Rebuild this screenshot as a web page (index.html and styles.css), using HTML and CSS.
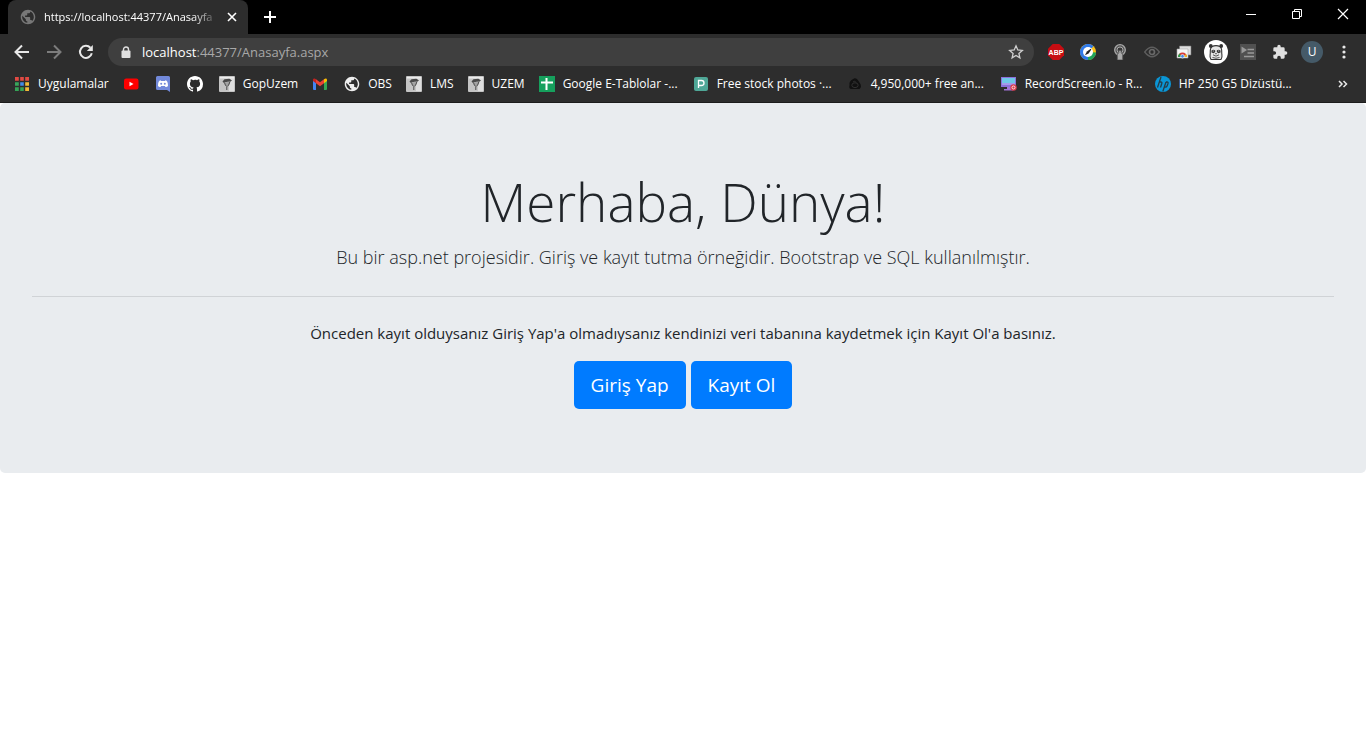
FILE: index.html
```html
<!DOCTYPE html>
<html lang="tr">
<head>
<meta charset="utf-8">
<title>Anasayfa</title>
<link rel="stylesheet" href="styles.css">
</head>
<body>
<svg class="defs" aria-hidden="true">
  <symbol id="globe" viewBox="1 1 22 22">
    <path fill="currentColor" d="M12 2C6.480 2 2 6.480 2 12s4.480 10 10 10 10-4.480 10-10S17.520 2 12 2zm-1 17.930c-3.950-.490-7-3.850-7-7.930 0-.620.080-1.210.210-1.790L9 15v1c0 1.100.9 2 2 2v1.930zm6.900-2.540c-.260-.810-1-1.390-1.900-1.390h-1v-3c0-.550-.450-1-1-1H8v-2h2c.550 0 1-.450 1-1V7h2c1.100 0 2-.9 2-2v-.410c2.930 1.190 5 4.060 5 7.410 0 2.080-.8 3.970-2.100 5.390z"/>
  </symbol>
  <symbol id="seal" viewBox="0 0 16 16">
    <rect width="16" height="16" rx="1" fill="#c4c4c4"/>
    <path d="M10 1h5v14h-5z" fill="#dedede"/>
    <path d="M1 1h14v1.500H1z" fill="#ececec"/>
    <path d="M3.500 5.500l2-2.300 5-.4 2.500 1.700-1.500 1-3 .2-4 1z" fill="#4a4a4a"/>
    <path d="M5.500 6.500l4-.6 1.500.6-1.500 3L8 10.500 6.300 9z" fill="#a2a2a2"/>
    <path d="M5.500 6.500l.8 2.500 1.500 1.500V14M11 5.500L9.600 9.300 8.500 10" fill="none" stroke="#3c3c3c" stroke-width=".9"/>
  </symbol>
</svg>

<header class="browser">
  <div class="tabstrip">
    <div class="tab">
      <svg class="icon tab-icon"><use href="#globe"/></svg>
      <span class="tab-title">https://localhost:44377/Anasayfa</span>
      <button class="plain" aria-label="Sekmeyi kapat"><svg width="10" height="10" viewBox="0 0 10 10"><path d="M1 1l8 8M9 1L1 9" stroke="#fff" stroke-width="1.600"/></svg></button>
    </div>
    <button class="plain new-tab" aria-label="Yeni sekme"><svg width="12" height="12" viewBox="0 0 12 12"><path d="M6 0v12M0 6h12" stroke="#fff" stroke-width="2"/></svg></button>
    <div class="window-controls">
      <button class="plain" aria-label="Küçült"><svg width="12" height="12" viewBox="0 0 12 12"><path d="M1 6.500h10" stroke="#fff"/></svg></button>
      <button class="plain" aria-label="Geri yükle"><svg width="12" height="12" viewBox="0 0 12 12"><path d="M1.500 3.500h7v7h-7zM3.500 3.500v-2h7v7h-2" fill="none" stroke="#fff"/></svg></button>
      <button class="plain" aria-label="Kapat"><svg width="12" height="12" viewBox="0 0 12 12"><path d="M1 1l10 10M11 1L1 11" stroke="#fff" stroke-width="1.200"/></svg></button>
    </div>
  </div>

  <div class="toolbar">
    <nav class="nav-buttons">
      <button class="plain" aria-label="Geri"><svg width="16" height="16" viewBox="0 0 16 16"><path d="M15 8H2M8 1.500L1.500 8 8 14.500" fill="none" stroke="#e8e8e8" stroke-width="2"/></svg></button>
      <button class="plain" aria-label="İleri"><svg width="16" height="16" viewBox="0 0 16 16"><path d="M1 8h13M8 1.500L14.500 8 8 14.500" fill="none" stroke="#7c7c7c" stroke-width="2"/></svg></button>
      <button class="plain" aria-label="Yenile"><svg width="16" height="16" viewBox="0 0 16 16"><path d="M13.800 9.300A6 6 0 1 1 12.400 3.800" fill="none" stroke="#e8e8e8" stroke-width="2"/><path d="M14.800 1v6h-6z" fill="#e8e8e8"/></svg></button>
    </nav>
    <div class="omnibox">
      <svg class="lock" width="10" height="13" viewBox="0 0 10 13"><path d="M2.500 5V3.500a2.500 2.500 0 0 1 5 0V5" fill="none" stroke="#e0e0e0" stroke-width="1.400"/><rect x=".5" y="4.500" width="9" height="7.500" rx="1" fill="#e0e0e0"/></svg>
      <span class="url"><span class="host">localhost</span>:44377/Anasayfa.aspx</span>
      <button class="plain" aria-label="Yer işareti ekle"><svg width="16" height="16" viewBox="0 0 16 16"><path d="M8 1.800l1.800 4.200 4.500.4-3.400 3 1 4.500L8 11.500l-3.900 2.400 1-4.500-3.400-3L6.200 6z" fill="none" stroke="#d0d0d0" stroke-width="1.300"/></svg></button>
    </div>
    <div class="extensions">
      <button class="plain" aria-label="Adblock Plus"><svg class="icon" viewBox="0 0 16 16"><path d="M4.700 0h6.600L16 4.700v6.600L11.300 16H4.700L0 11.300V4.700z" fill="#c70d12"/><text class="abp" x="8" y="10.600" text-anchor="middle">ABP</text></svg></button>
      <button class="plain" aria-label="Ayarlar"><svg class="icon" viewBox="0 0 16 16"><circle cx="8" cy="8" r="8" fill="#fbc116"/><path d="M8 8L13.500 2.200A8 8 0 0 0 0 8c0 2 .6 3.500 1.500 4.700z" fill="#2f79e8"/><path d="M8 8l-6.500 4.700A8 8 0 0 0 8 16l5-2z" fill="#2876e8"/><path d="M8 8l8 .5c0 2-1 4-2.500 5.500-2 2-4 2-5.500 2z" fill="#20a35a"/><circle cx="8" cy="8" r="5" fill="#fff"/><path d="M10.800 4.800l.5.600-2.700 4-3.700 1.900 2-3.800z" fill="#222"/></svg></button>
      <button class="plain" aria-label="Anahtar"><svg class="icon" viewBox="0 0 16 16"><circle cx="8" cy="6" r="5.300" fill="#555" stroke="#aaa" stroke-width="1.300"/><circle cx="8" cy="6" r="3" fill="#383838" stroke="#aaa"/><path d="M6.800 6.500h2.400V9l1.500 1v6H5.300v-6l1.500-1z" fill="#aaa" stroke="#555" stroke-width=".8"/></svg></button>
      <button class="plain" aria-label="Göz"><svg class="icon" viewBox="0 0 16 16"><path d="M.7 8Q8-1.500 15.300 8 8 17.500.7 8z" fill="none" stroke="#5e5e5e" stroke-width="1.300"/><circle cx="8" cy="8" r="2.500" fill="none" stroke="#696969" stroke-width="1.700"/></svg></button>
      <button class="plain" aria-label="Pencereler"><svg class="icon" viewBox="0 0 16 16"><path d="M3.500 2H15v9H3.500z" fill="#ddd" stroke="#777" stroke-width=".6"/><path d="M1 5h11v9H1z" fill="#f5f5f5" stroke="#aaa" stroke-width=".6"/><path d="M2 13a4.500 4.500 0 0 1 9 0" fill="#d83b36"/><path d="M2 13a4.500 4.500 0 0 1 1.500-3.400L6 13z" fill="#2b9b4b"/><path d="M11 13a4.500 4.500 0 0 0-1-2.900L7 13z" fill="#edb623"/><circle cx="6.500" cy="12.300" r="1.800" fill="#4686e8" stroke="#fff" stroke-width=".6"/></svg></button>
      <button class="plain" aria-label="Panda"><svg width="24" height="24" viewBox="0 0 24 24"><circle cx="12" cy="12" r="12" fill="#fff"/><circle cx="6.800" cy="6" r="1.900" fill="#333"/><circle cx="17.200" cy="6" r="1.900" fill="#333"/><path d="M6.500 9C7.500 4.500 16.500 4.500 17.500 9c.5 2.500 0 4 .4 5.500.4 2 0 3.500-.9 5H7c-.9-1.500-1.300-3-.9-5 .4-1.500-.1-3 .4-5.500z" fill="#e6e6e6" stroke="#333" stroke-width="1.100"/><path d="M7.500 10.500q2-1.500 3.700 0v1.500l-1.500 1.200-2.200-.8zM16.500 10.500q-2-1.500-3.700 0v1.500l1.500 1.200 2.200-.8z" fill="#333"/><path d="M8.800 11h1M14.200 11h1" stroke="#fff" stroke-width=".8"/><path d="M10.800 13.200h2.400L12 14.500z" fill="#333"/><path d="M9 14.800q3 2.700 6 0M8.500 17.500q3.500 1.500 7 0" fill="none" stroke="#444" stroke-width=".9"/></svg></button>
      <button class="plain" aria-label="Komut"><svg class="icon" viewBox="0 0 16 16"><path d="M0 0h16v16H0z" fill="#505050"/><path d="M1.500 2.500L7 6l-5.500 3.500z" fill="#999"/><path d="M7.500 5.500H14M7.500 9H14M4 12.500h10" stroke="#999" stroke-width="1.400"/></svg></button>
      <button class="plain" aria-label="Uzantılar"><svg class="icon" viewBox="0 0 24 24"><path d="M20.500 11H19V7a2 2 0 0 0-2-2h-4V3.500a2.500 2.500 0 0 0-5 0V5H4a2 2 0 0 0-2 2v3.800h1.500a2.700 2.700 0 0 1 0 5.400H2V20a2 2 0 0 0 2 2h3.800v-1.500a2.700 2.700 0 0 1 5.400 0V22H17a2 2 0 0 0 2-2v-4h1.500a2.500 2.500 0 0 0 0-5z" fill="#e0e0e0"/></svg></button>
      <button class="plain avatar" aria-label="Profil">U</button>
      <button class="plain" aria-label="Menü"><svg class="icon" viewBox="0 0 16 16"><g fill="#e8e8e8"><circle cx="8" cy="3" r="1.600"/><circle cx="8" cy="8" r="1.600"/><circle cx="8" cy="13" r="1.600"/></g></svg></button>
    </div>
  </div>

  <nav class="bookmarks" aria-label="Yer işaretleri">
    <a class="named" href="#"><svg class="icon" viewBox="0 0 16 16"><path d="M1 1h4v4H1zM6 1h4v4H6zM11 1h4v4h-4z" fill="#e24a43"/><path d="M1 6h4v4H1z" fill="#38a55b"/><path d="M6 6h4v4H6z" fill="#438be8"/><path d="M11 6h4v4h-4z" fill="#f1b938"/><path d="M1 11h4v4H1zM6 11h4v4H6z" fill="#35a356"/><path d="M11 11h4v4h-4z" fill="#f1b938"/><path d="M5.500 0v16M10.500 0v16M0 5.500h16M0 10.500h16" stroke="#2d2d2d" stroke-width="1.400"/></svg>Uygulamalar</a>
    <a href="#" aria-label="YouTube"><svg class="icon" viewBox="0 0 16 16"><rect x="1" y="2.500" width="14.500" height="11" rx="2.200" fill="#f00"/><path d="M6.500 5.700v4.600L10.500 8z" fill="#fff"/></svg></a>
    <a href="#" aria-label="Discord"><svg class="icon" viewBox="0 0 16 16"><path d="M2.500 0h11A1.500 1.500 0 0 1 15 1.500V16l-3-2H2.500A1.500 1.500 0 0 1 1 12.500v-11A1.500 1.500 0 0 1 2.500 0z" fill="#7289da"/><path d="M5.500 4.200C4 4.400 3 6 3 10c1 1 2 1.200 2.500 1l.6-.9h3.800l.6.900c.5.200 1.500 0 2.500-1 0-4-1-5.600-2.500-5.800l-.6.700H6.100z" fill="#fff"/><circle cx="6.200" cy="7.800" r="1" fill="#7289da"/><circle cx="9.800" cy="7.800" r="1" fill="#7289da"/></svg></a>
    <a href="#" aria-label="GitHub"><svg class="icon" viewBox="0 0 16 16"><path fill="#fff" d="M8 0C3.580 0 0 3.580 0 8c0 3.540 2.290 6.530 5.470 7.590.4.070.55-.17.55-.38v-1.490c-2.010.37-2.530-.49-2.690-.94-.09-.23-.48-.94-.82-1.130-.28-.15-.68-.52-.01-.53.63-.01 1.080.58 1.230.82.720 1.210 1.870.87 2.330.66.070-.52.280-.87.510-1.070-1.780-.2-3.640-.89-3.640-3.950 0-.87.310-1.590.82-2.150-.08-.2-.36-1.020.08-2.120 0 0 .67-.21 2.200.82A7.700 7.700 0 0 1 8 3.860c.68 0 1.360.09 2 .27 1.530-1.040 2.200-.82 2.200-.82.44 1.100.16 1.920.08 2.120.51.560.82 1.270.82 2.150 0 3.070-1.870 3.750-3.650 3.950.29.250.54.730.54 1.480v2.200c0 .21.150.46.550.38A8 8 0 0 0 16 8c0-4.420-3.580-8-8-8z"/></svg></a>
    <a class="named" href="#"><svg class="icon"><use href="#seal"/></svg>GopUzem</a>
    <a href="#" aria-label="Gmail"><svg class="icon" viewBox="0 0 16 16"><path d="M1 3.500l3 2.200V14H2a1 1 0 0 1-1-1z" fill="#4285f4"/><path d="M15 3.500l-3 2.200V14h2a1 1 0 0 0 1-1z" fill="#34a853"/><path d="M4 3.300l4 3 4-3v4L8 10.300l-4-3z" fill="#ea4335"/><path d="M1 4c0-1.800 1.500-2.200 3-.7v4L1 5.100z" fill="#c5221f"/><path d="M15 4c0-1.800-1.500-2.200-3-.7v4l3-2.200z" fill="#fbbc04"/></svg></a>
    <a class="named" href="#"><svg class="icon globe-light"><use href="#globe"/></svg>OBS</a>
    <a class="named" href="#"><svg class="icon"><use href="#seal"/></svg>LMS</a>
    <a class="named" href="#"><svg class="icon"><use href="#seal"/></svg>UZEM</a>
    <a class="long" href="#"><svg class="icon" viewBox="0 0 16 16"><path d="M0 0h16v16H0z" fill="#16a05d"/><path d="M7.500 2v12M2 6.500h12" stroke="#fff" stroke-width="2"/></svg>Google E-Tablolar -...</a>
    <a class="long" href="#"><svg class="icon" viewBox="0 0 16 16"><rect x="1" y="1" width="14" height="14" rx="2" fill="#4fa797"/><path d="M5.500 12V4.500h3a2.500 2.500 0 0 1 0 5H5.500" fill="none" stroke="#fff" stroke-width="1.300"/></svg>Free stock photos ·...</a>
    <a class="long" href="#"><svg class="icon" viewBox="0 0 16 16"><path d="M2.500 9C2 5 5 3.500 7 2.500c3-1 4 2 5.500 4 2 3 2 5 0 6.500H4c-2-.5-2-2-1.500-4z" fill="#111"/><ellipse cx="8" cy="9.200" rx="3.200" ry="2.400" fill="none" stroke="#303030"/><path d="M6 6q2-2 3 .5" fill="none" stroke="#303030"/></svg>4,950,000+ free an...</a>
    <a class="long" href="#"><svg class="icon" viewBox="0 0 16 16"><path d="M0 1h15v10H0z" fill="#8d70dc"/><path d="M1 2h13v5H1z" fill="#6fc7e8"/><path d="M1 7h13v2H1z" fill="#a599ec"/><path d="M6 11h4v2h2v1.500H3V13h3z" fill="#a273d8"/><circle cx="12.500" cy="11.500" r="3.200" fill="#d93c4c"/><circle cx="12.500" cy="11.500" r="1.500" fill="#d93c4c" stroke="#fff" stroke-width=".8"/></svg>RecordScreen.io - R...</a>
    <a class="long" href="#"><svg class="icon" viewBox="0 0 16 16"><circle cx="8" cy="8" r="8" fill="#0a96d6"/><path d="M6 1L2.500 11.500M4.300 6h1.500q1.500 0 1 1.500L5.500 11.500M11 6L7.800 15.500M11 6h1q1.500 0 1 1.500l-.8 2.200q-.5 1.500-2 1.500H9.200" fill="none" stroke="#263c48" stroke-width="1.300"/></svg>HP 250 G5 Dizüstü...</a>
    <button class="plain overflow" aria-label="Diğer yer işaretleri"><svg width="10" height="8" viewBox="0 0 10 8"><path d="M1 1l3 3-3 3M5.500 1l3 3-3 3" fill="none" stroke="#e8e8e8" stroke-width="1.500"/></svg></button>
  </nav>
</header>

<main class="jumbotron">
  <h1 class="display">Merhaba, Dünya!</h1>
  <p class="lead">Bu bir asp.net projesidir. Giriş ve kayıt tutma örneğidir. Bootstrap ve SQL kullanılmıştır.</p>
  <hr class="divider">
  <p class="info">Önceden kayıt olduysanız Giriş Yap'a olmadıysanız kendinizi veri tabanına kaydetmek için Kayıt Ol'a basınız.</p>
  <div class="actions">
    <a class="btn" href="#">Giriş Yap</a>
    <a class="btn" href="#">Kayıt Ol</a>
  </div>
</main>
</body>
</html>
```
FILE: styles.css
```css
* { box-sizing: border-box; }

body {
  margin: 0;
  background: #fff;
  color: #212529;
  font-family: "Open Sans", "Noto Sans", sans-serif;
  font-size: 15px;
  line-height: 24px;
}

.defs { display: none; }
.icon { width: 16px; height: 16px; flex: none; }
svg { display: block; }

.plain {
  display: flex;
  align-items: center;
  justify-content: center;
  flex: none;
  padding: 0;
  border: 0;
  background: none;
  color: inherit;
  font: inherit;
}

.browser {
  background: #2d2d2d;
  border-bottom: 1px solid #1c1c1c;
  color: #fff;
  font-size: 12px;
  line-height: 16px;
}

.tabstrip {
  display: flex;
  height: 34px;
  padding-left: 8px;
  background: #000;
}

.tab {
  display: flex;
  align-items: center;
  width: 240px;
  padding: 0 11px 0 12px;
  border-radius: 8px 8px 0 0;
  background: #2d2d2d;
}

.tab-icon { color: #777; }
.globe-light { color: #eee; }

.tab-title {
  flex: 1;
  min-width: 0;
  margin: 0 8px;
  font-size: 11px;
  white-space: nowrap;
  mask-image: linear-gradient(to right, #000 85%, transparent);
}

.new-tab { width: 28px; margin-left: 8px; }

.window-controls {
  display: flex;
  margin-left: auto;
  height: 28px;
}
.window-controls .plain { width: 46px; }

.toolbar {
  display: flex;
  align-items: center;
  height: 36px;
  padding: 0 10px 0 14px;
}

.nav-buttons { display: flex; gap: 16px; margin-right: 14px; }

.omnibox {
  display: flex;
  align-items: center;
  flex: 1;
  height: 28px;
  margin-right: 10px;
  padding: 0 10px 0 13px;
  border-radius: 14px;
  background: #3f3f3f;
}

.url {
  flex: 1;
  margin-left: 11px;
  color: #a8a8a8;
  font-size: 13px;
}
.host { color: #fff; }

.extensions { display: flex; align-items: center; gap: 8px; }
.extensions .plain { width: 24px; height: 24px; }
.abp { fill: #fff; font: bold 7px "Liberation Sans", sans-serif; }

.extensions .avatar {
  width: 22px;
  height: 22px;
  margin: 0 1px;
  border-radius: 50%;
  background: #455a68;
}

.bookmarks {
  display: flex;
  align-items: center;
  gap: 16px;
  height: 32px;
  padding: 0 18px 4px 14px;
}

.bookmarks a {
  display: flex;
  align-items: center;
  gap: 8px;
  color: #fff;
  text-decoration: none;
  white-space: nowrap;
}
.bookmarks .named { margin-right: -2px; }
.bookmarks .long { width: 138px; }
.overflow { margin-left: auto; }

.jumbotron {
  padding: 64px 32px;
  border-radius: 5px;
  background: #e9ecef;
  text-align: center;
}

.display {
  margin: 0 0 8px;
  padding-top: 2px;
  font-size: 53px;
  font-weight: 300;
  line-height: 65px;
}

.lead {
  margin: 0;
  font-size: 18px;
  font-weight: 300;
  line-height: 30px;
}

.divider {
  margin: 24px 0;
  border: 0;
  border-top: 1px solid #d0d3d6;
}

.info { margin: 0 0 16px; }

.actions { display: flex; justify-content: center; gap: 5px; }

.btn {
  padding: 9px 17px;
  border-radius: 5px;
  background: #007bff;
  color: #fff;
  font-size: 19px;
  line-height: 30px;
  text-decoration: none;
}
```
